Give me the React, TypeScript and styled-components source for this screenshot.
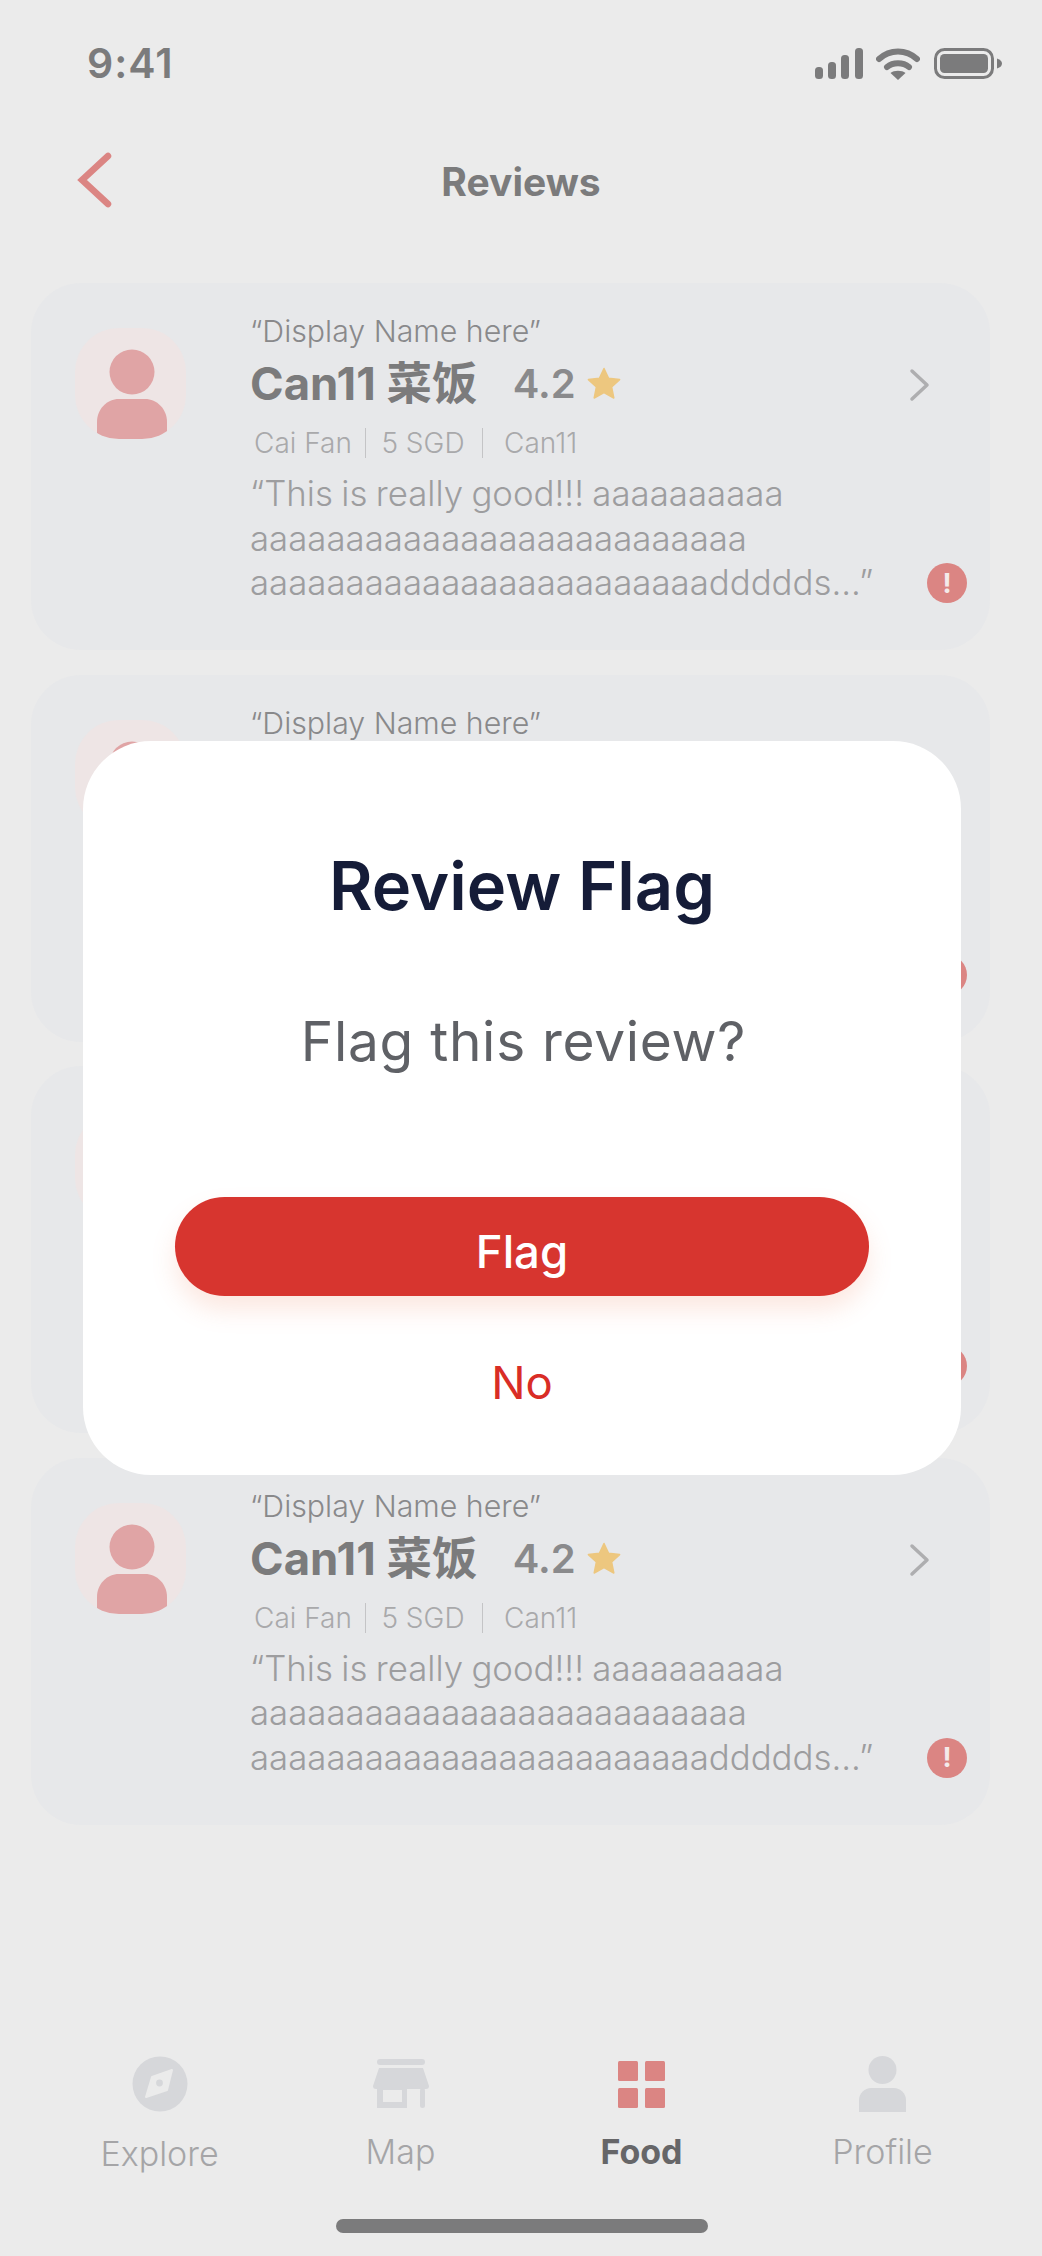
import * as React from "react";
import styled, { createGlobalStyle } from "styled-components";

const GlobalStyle = createGlobalStyle`
  html, body {
    margin: 0;
    padding: 0;
    background: #ebebeb;
  }
  * {
    box-sizing: border-box;
  }
`;

const Screen = styled.main`
  position: relative;
  width: 1042px;
  height: 2256px;
  overflow: hidden;
  background: #ebebeb;
  font-family: Inter, "Noto Sans CJK SC", sans-serif;
  display: flex;
  flex-direction: column;
`;

const StatusBar = styled.div`
  height: 126px;
  padding: 39px 40px 0 87px;
  display: flex;
  justify-content: space-between;
  align-items: flex-start;
  color: #7b7b7c;
`;

const Time = styled.span`
  font-size: 41px;
  line-height: 48px;
  font-weight: 600;
  letter-spacing: 1px;
`;

const StatusIcons = styled.div`
  display: flex;
  align-items: flex-start;
  margin-top: 9px;
`;

const Header = styled.header`
  position: relative;
  height: 111px;
  padding-left: 76px;
  display: flex;
  align-items: center;
  justify-content: center;
`;

const BackButton = styled.div`
  position: absolute;
  left: 76px;
  top: 26px;
  display: flex;
`;

const Title = styled.h1`
  margin: 0;
  font-size: 39px;
  line-height: 50px;
  font-weight: 700;
  color: #7b7b7c;
  transform: translateX(-38px);
`;

const CardList = styled.section`
  margin-top: 46px;
  padding: 0 52px 0 31px;
  display: flex;
  flex-direction: column;
  gap: 24.5px;
`;

const Card = styled.article`
  height: 367px;
  padding: 30px 23px 0 44px;
  border-radius: 50px;
  background: #e7e8ea;
  display: flex;
`;

const Avatar = styled.div`
  width: 111px;
  height: 111px;
  margin-top: 15px;
  flex-shrink: 0;
  border-radius: 44px;
  background: #eee5e5;
  overflow: hidden;
  display: flex;
`;

const CardBody = styled.div`
  margin-left: 64px;
  width: 650px;
  flex-shrink: 0;
  min-width: 0;
`;

const DisplayName = styled.div`
  font-size: 30.3px;
  line-height: 36px;
  font-weight: 300;
  color: #89898b;
`;

const NameRow = styled.div`
  margin-top: 10px;
  height: 50px;
  display: flex;
  align-items: center;
`;

const FoodName = styled.span`
  font-size: 45.5px;
  line-height: 50px;
  font-weight: 700;
  color: #7b7b7c;
`;

const Rating = styled.span`
  margin-left: 35px;
  font-size: 40px;
  line-height: 50px;
  font-weight: 600;
  color: #8a8a8c;
`;

const StarIcon = styled.svg`
  margin-left: 11px;
  margin-top: -1px;
`;

const MetaRow = styled.div`
  margin-top: 18px;
  padding-left: 4px;
  display: flex;
  align-items: center;
  font-size: 28px;
  line-height: 32px;
  font-weight: 300;
  color: #a9a9ab;
`;

const MetaDivider = styled.i<{ $before: number; $after: number }>`
  width: 1.5px;
  height: 30px;
  margin: 0 ${(props) => props.$after}px 0 ${(props) => props.$before}px;
  background: #c4c4c6;
`;

const ReviewText = styled.p`
  margin: 12px 0 0;
  font-size: 34.8px;
  line-height: 44.6px;
  font-weight: 300;
  word-spacing: -1.4px;
  color: #9d9d9f;
  white-space: pre-line;
`;

const CardAside = styled.div`
  flex: 1;
  display: flex;
  flex-direction: column;
  justify-content: space-between;
  align-items: flex-end;
  height: 290px;
  padding-top: 55px;
`;

const ChevronSlot = styled.div`
  display: flex;
  margin-right: 36px;
`;

const FlagBadge = styled.div`
  width: 40px;
  height: 40px;
  border-radius: 50%;
  background: #db8583;
  color: #f4eaea;
  display: flex;
  align-items: center;
  justify-content: center;
  font-size: 27px;
  font-weight: 700;
`;

const TabBar = styled.nav`
  margin-top: auto;
  height: 200px;
  padding: 0 39px;
  position: relative;
  display: grid;
  grid-template-columns: 241px 241px 241px 241px;
  justify-content: start;
`;

const Tab = styled.div<{ $active?: boolean }>`
  display: flex;
  flex-direction: column;
  align-items: center;
  color: ${(props) => (props.$active ? "#666668" : "#a5a5a7")};
  font-size: 34px;
  font-weight: ${(props) => (props.$active ? 700 : 300)};
`;

const TabIconSlot = styled.div`
  height: 56px;
  display: flex;
  align-items: center;
  justify-content: center;
`;

const TabLabel = styled.span<{ $drop?: number }>`
  margin-top: ${(props) => 20 + (props.$drop || 0)}px;
  line-height: 40px;
`;

const HomeIndicator = styled.div`
  position: absolute;
  left: 336px;
  top: 163px;
  width: 372px;
  height: 14px;
  border-radius: 7px;
  background: #7b7b7c;
`;

const Overlay = styled.div`
  position: absolute;
  inset: 0;
  padding-top: 741px;
  display: flex;
  justify-content: center;
  pointer-events: none;
`;

const Dialog = styled.div`
  width: 878px;
  height: 734px;
  margin-left: 2px;
  padding: 105px 92px 0;
  border-radius: 68px;
  background: #ffffff;
  text-align: center;
`;

const DialogTitle = styled.h2`
  margin: 0;
  font-size: 66.8px;
  line-height: 80px;
  font-weight: 600;
  color: #151c38;
`;

const DialogText = styled.p`
  margin: 82px 0 0;
  padding-left: 3px;
  font-size: 55px;
  line-height: 66px;
  font-weight: 400;
  color: #5f6166;
  letter-spacing: 0.7px;
`;

const FlagButton = styled.button`
  display: block;
  width: 694px;
  height: 99px;
  margin: 123px 0 0;
  padding: 10px 0 0;
  border: 0;
  border-radius: 50px;
  background: #d7352f;
  color: #ffffff;
  font-family: inherit;
  font-size: 45.5px;
  font-weight: 500;
  box-shadow: 0 14px 24px rgba(240, 130, 90, 0.18);
`;

const NoButton = styled.button`
  display: block;
  width: 694px;
  margin: 61px 0 0;
  padding: 0;
  border: 0;
  background: none;
  color: #d92d26;
  font-family: inherit;
  font-size: 45.5px;
  line-height: 52px;
  font-weight: 400;
`;

const SignalIcon = () => (
  <svg width="48" height="32" viewBox="0 0 48 32" fill="#7b7b7c">
    <rect x="0" y="19" width="8" height="12" rx="3.5" />
    <rect x="13" y="14" width="8" height="17" rx="3.5" />
    <rect x="26" y="7" width="8" height="24" rx="3.5" />
    <rect x="40" y="0" width="8" height="31" rx="3.5" />
  </svg>
);

const WifiIcon = () => (
  <svg width="44" height="32" viewBox="0 0 44 32" style={{ marginLeft: 13 }}>
    <path d="M3 11C14 1 30 1 41 11" fill="none" stroke="#7b7b7c" strokeWidth="6" strokeLinecap="round" />
    <path d="M11 19C17 14 27 14 33 19" fill="none" stroke="#7b7b7c" strokeWidth="6" strokeLinecap="round" />
    <path d="M14.5 25C18 22 26 22 29.5 25L22 32Z" fill="#7b7b7c" />
  </svg>
);

const BatteryIcon = () => (
  <svg width="68" height="32" viewBox="0 0 68 32" style={{ marginLeft: 14 }}>
    <rect x="1.5" y="1.5" width="57" height="28" rx="9" fill="none" stroke="#7b7b7c" strokeWidth="3" />
    <rect x="6" y="6" width="48" height="19" rx="4.5" fill="#7b7b7c" />
    <path d="M63 10.5C66.5 11.5 68 13.5 68 15.5C68 17.5 66.5 19.5 63 20.5Z" fill="#7b7b7c" />
  </svg>
);

const AvatarFigure = () => (
  <svg width="111" height="111" viewBox="0 0 111 111">
    <circle cx="57" cy="44" r="22.5" fill="#e0a4a5" />
    <path d="M22 111V94C22 81 32 71 44 71H70C82 71 92 81 92 94V111C76 114 38 114 22 111Z" fill="#e0a4a5" />
  </svg>
);

const Star = () => (
  <StarIcon width="34" height="33" viewBox="0 0 34 33">
    <path
      d="M17 1.5L21.6 11.2L32.6 12.6L24.6 20L26.8 31L17 25.6L7.2 31L9.4 20L1.4 12.6L12.4 11.2Z"
      fill="#edc77f"
      stroke="#edc77f"
      strokeWidth="1.5"
      strokeLinejoin="round"
    />
  </StarIcon>
);

const ChevronRight = () => (
  <svg width="22" height="34" viewBox="0 0 22 34">
    <path d="M3 3L18 17L3 31" fill="none" stroke="#aeaeb0" strokeWidth="3.5" strokeLinecap="round" strokeLinejoin="round" />
  </svg>
);

const ReviewCard = () => (
  <Card>
    <Avatar>
      <AvatarFigure />
    </Avatar>
    <CardBody>
      <DisplayName>“Display Name here”</DisplayName>
      <NameRow>
        <FoodName>Can11 菜饭</FoodName>
        <Rating>4.2</Rating>
        <Star />
      </NameRow>
      <MetaRow>
        <span>Cai Fan</span>
        <MetaDivider $before={13} $after={15} />
        <span>5 SGD</span>
        <MetaDivider $before={17} $after={21} />
        <span>Can11</span>
      </MetaRow>
      <ReviewText>
        {"“This is really good!!! aaaaaaaaaa\naaaaaaaaaaaaaaaaaaaaaaaaaa\naaaaaaaaaaaaaaaaaaaaaaaaddddds...”"}
      </ReviewText>
    </CardBody>
    <CardAside>
      <ChevronSlot>
        <ChevronRight />
      </ChevronSlot>
      <FlagBadge>!</FlagBadge>
    </CardAside>
  </Card>
);

const App = () => {
  return (
    <Screen>
      <GlobalStyle />
      <StatusBar>
        <Time>9:41</Time>
        <StatusIcons>
          <SignalIcon />
          <WifiIcon />
          <BatteryIcon />
        </StatusIcons>
      </StatusBar>
      <Header>
        <BackButton>
          <svg width="36" height="56" viewBox="0 0 36 56">
            <path d="M32 4L6 28L32 52" fill="none" stroke="#db8583" strokeWidth="6.5" strokeLinecap="round" strokeLinejoin="miter" />
          </svg>
        </BackButton>
        <Title>Reviews</Title>
      </Header>
      <CardList>
        <ReviewCard />
        <ReviewCard />
        <ReviewCard />
        <ReviewCard />
      </CardList>
      <TabBar>
        <Tab>
          <TabIconSlot>
            <svg width="56" height="56" viewBox="0 0 56 56">
              <circle cx="28" cy="28" r="27.5" fill="#d6d7da" />
              <path d="M40 14L35 34L14 41L20 21Z" fill="#ebebeb" stroke="#ebebeb" strokeWidth="2" strokeLinejoin="round" />
              <circle cx="27.5" cy="27" r="3.4" fill="#d6d7da" />
            </svg>
          </TabIconSlot>
          <TabLabel $drop={2}>Explore</TabLabel>
        </Tab>
        <Tab>
          <TabIconSlot>
            <svg width="56" height="50" viewBox="0 0 56 50">
              <rect x="4" y="0" width="48" height="6" rx="3" fill="#d6d7da" />
              <path d="M6 9H50L56 27C56 29 55 30 53 30H3C1 30 0 29 0 27Z" fill="#d6d7da" />
              <path d="M4 29H34V49H4ZM10 31V43H29V31Z" fill="#d6d7da" fillRule="evenodd" />
              <rect x="47" y="29" width="5" height="20" rx="2.5" fill="#d6d7da" />
            </svg>
          </TabIconSlot>
          <TabLabel>Map</TabLabel>
        </Tab>
        <Tab $active>
          <TabIconSlot>
            <svg width="47" height="47" viewBox="0 0 47 47" fill="#db8583">
              <rect x="0" y="0" width="20" height="20" rx="1.5" />
              <rect x="27" y="0" width="20" height="20" rx="1.5" />
              <rect x="0" y="27" width="20" height="20" rx="1.5" />
              <rect x="27" y="27" width="20" height="20" rx="1.5" />
            </svg>
          </TabIconSlot>
          <TabLabel>Food</TabLabel>
        </Tab>
        <Tab>
          <TabIconSlot>
            <svg width="47" height="56" viewBox="0 0 47 56" fill="#d6d7da">
              <circle cx="23.5" cy="14" r="14" />
              <path d="M0 56V44C0 37 6 32 12 32H35C41 32 47 37 47 44V56C32 58 15 58 0 56Z" />
            </svg>
          </TabIconSlot>
          <TabLabel>Profile</TabLabel>
        </Tab>
        <HomeIndicator />
      </TabBar>
      <Overlay>
        <Dialog>
          <DialogTitle>Review Flag</DialogTitle>
          <DialogText>Flag this review?</DialogText>
          <FlagButton>Flag</FlagButton>
          <NoButton>No</NoButton>
        </Dialog>
      </Overlay>
    </Screen>
  );
};

export default App;
